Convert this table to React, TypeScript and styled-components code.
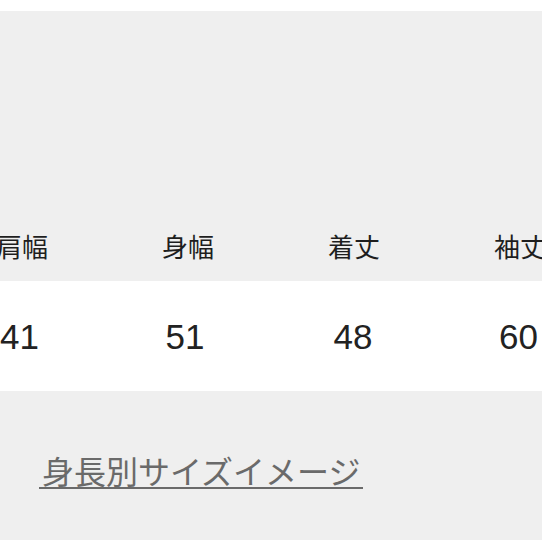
import React from "react";
import styled, { createGlobalStyle } from "styled-components";

const Global = createGlobalStyle`
  html, body { margin: 0; padding: 0; background: #ffffff; }
  body { font-family: "Liberation Sans", "Noto Sans CJK JP", sans-serif; }
`;

const Page = styled.div`
  width: 542px;
  height: 542px;
  overflow: hidden;
  background: #ffffff;
  padding-top: 11px;
  box-sizing: border-box;
`;

const GraySection = styled.div<{ $h: number }>`
  background: #efefef;
  height: ${(p) => p.$h}px;
  display: flex;
  flex-direction: column;
  justify-content: flex-end;
`;

const Row = styled.div<{ $h: number; $bg: string }>`
  display: grid;
  grid-template-columns: repeat(4, 166px);
  margin-left: -61px;
  height: ${(p) => p.$h}px;
  background: ${(p) => p.$bg};
  align-items: center;
`;

const HeadCell = styled.div`
  text-align: center;
  font-family: "Noto Sans CJK JP", sans-serif;
  font-size: 26px;
  line-height: 1;
  color: #1e1e1e;
  white-space: nowrap;
`;

const ValueCell = styled.div<{ $shift: number }>`
  text-align: center;
  font-size: 35px;
  line-height: 1;
  color: #222222;
  transform: translateX(${(p) => p.$shift}px);
`;

const LinkSection = styled.div`
  background: #efefef;
  height: 149px;
  padding-top: 62px;
  padding-left: 39px;
  box-sizing: border-box;
`;

const SizeLink = styled.a`
  display: inline-block;
  font-family: "Noto Sans CJK JP", sans-serif;
  font-size: 32px;
  line-height: 34px;
  color: #6a6a6a;
  text-decoration: none;
  padding: 0 3px 0 3px;
  border-bottom: 2px solid #6a6a6a;
`;

const headers = ["肩幅", "身幅", "着丈", "袖丈"];
const values = ["41", "51", "48", "60"];
const shifts = [-2.5, -3, -1, -1.5];

export default function App() {
  return (
    <Page>
      <Global />
      <GraySection $h={270}>
        <Row $h={71} $bg="transparent">
          {headers.map((h) => (
            <HeadCell key={h}>{h}</HeadCell>
          ))}
        </Row>
      </GraySection>
      <Row $h={110} $bg="#ffffff">
        {values.map((v, i) => (
          <ValueCell key={v} $shift={shifts[i]}>
            {v}
          </ValueCell>
        ))}
      </Row>
      <LinkSection>
        <SizeLink href="#">身長別サイズイメージ</SizeLink>
      </LinkSection>
    </Page>
  );
}
